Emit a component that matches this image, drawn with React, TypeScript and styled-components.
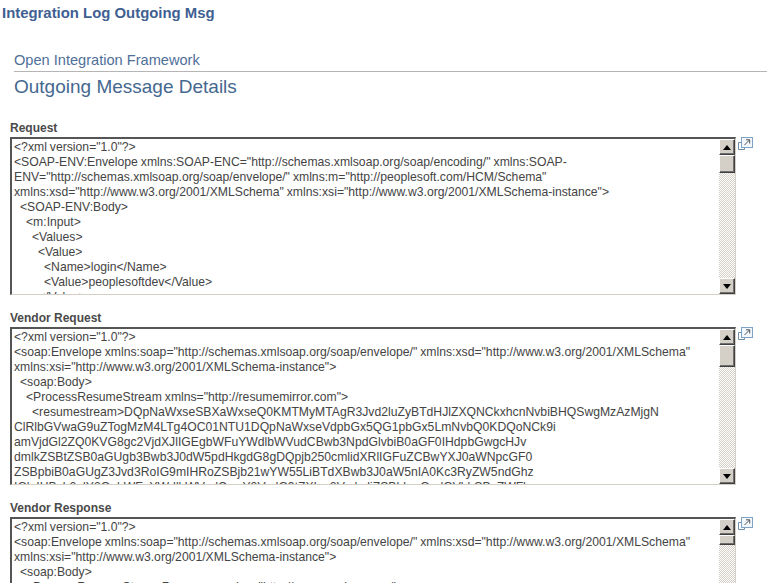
import { createGlobalStyle, styled } from 'styled-components'

const GlobalStyle = createGlobalStyle`
	html, body {
		margin: 0;
		padding: 0;
		height: 583px;
		overflow: hidden;
		background: #fff;
		font-family: 'Liberation Sans', Arial, sans-serif;
	}
`

const Page = styled.div`
	display: flex;
	flex-direction: column;
	width: 767px;
	height: 583px;
	overflow: hidden;

	& > * {
		flex-shrink: 0;
	}
`

const PageTitle = styled.h1`
	margin: 0;
	padding: 5px 0 0 2px;
	height: 46px;
	box-sizing: border-box;
	font-size: 14.9px;
	line-height: 16px;
	font-weight: bold;
	color: #3f5f92;
`

const Crumb = styled.a`
	display: block;
	margin-left: 14px;
	height: 25px;
	font-size: 14.6px;
	line-height: 28px;
	color: #4f7099;
	border-bottom: 1px solid #b5b5b5;
`

const Heading = styled.h2`
	margin: 0 0 0 14px;
	height: 49px;
	padding-top: 2px;
	box-sizing: border-box;
	font-size: 19px;
	line-height: 26px;
	font-weight: normal;
	color: #45688f;
`

const Section = styled.section`
	display: flex;
	flex-direction: column;
	margin: 0 0 16px 10px;
	width: 745px;
`

const Label = styled.div`
	height: 16px;
	font-size: 12px;
	line-height: 15px;
	font-weight: bold;
	color: #4a4a4a;
`

const Row = styled.div`
	display: flex;
	align-items: flex-start;
`

const Box = styled.div`
	display: flex;
	width: 726px;
	height: 158px;
	box-sizing: border-box;
	border-top: 2px solid #555;
	border-left: 2px solid #555;
	border-right: 1px solid #d4d0c8;
	border-bottom: 1px solid #d4d0c8;
`

const Content = styled.pre`
	flex: 1;
	margin: 0;
	padding: 1px 0 0 2px;
	overflow: hidden;
	font-family: 'Liberation Sans', Arial, sans-serif;
	font-size: 12.2px;
	line-height: 15px;
	word-spacing: -0.39px;
	color: #444;
	white-space: pre;
`

const Scrollbar = styled.div`
	display: flex;
	flex-direction: column;
	width: 16px;
	flex-shrink: 0;
	background-color: #fff;
	background-image: repeating-conic-gradient(#d4d0c8 0 25%, #fff 0 50%);
	background-size: 2px 2px;
`

const ScrollButton = styled.div`
	display: flex;
	align-items: center;
	justify-content: center;
	flex-shrink: 0;
	width: 16px;
	height: 16px;
	box-sizing: border-box;
	background: #d4d0c8;
	border-top: 1px solid #fff;
	border-left: 1px solid #fff;
	border-right: 1px solid #404040;
	border-bottom: 1px solid #404040;
	box-shadow: inset -1px -1px 0 #707070;
`

const Arrow = styled.span<{ $up?: boolean }>`
	width: 0;
	height: 0;
	border-left: 4px solid transparent;
	border-right: 4px solid transparent;
	${p => (p.$up ? 'border-bottom: 5px solid #000;' : 'border-top: 5px solid #000;')}
`

const Thumb = styled(ScrollButton)<{ $size: number }>`
	height: ${p => p.$size}px;
`

const Track = styled.div`
	flex: 1;
`

const ExpandLink = styled.a`
	display: block;
	width: 15px;
	height: 13px;
	margin: -1px 0 0 2px;
`

const ExpandIcon = () => (
	<svg width='15' height='13' viewBox='0 0 15 13' fill='none'>
		<path d='M3 5.5H.5v7h6V10.5' stroke='#6f8fa8' />
		<rect x='3.5' y='.5' width='11' height='10' fill='#f2f7fb' stroke='#7ea3c4' />
		<path d='M6.5 8l5-5M8 2.8h3.7v3.7' stroke='#555' />
	</svg>
)

type PanelProps = {
	label: string
	text: string
	thumb: number
}

const Panel = ({ label, text, thumb }: PanelProps) => (
	<Section>
		<Label>{label}</Label>
		<Row>
			<Box>
				<Content>{text}</Content>
				<Scrollbar>
					<ScrollButton>
						<Arrow $up />
					</ScrollButton>
					<Thumb $size={thumb} />
					<Track />
					<ScrollButton>
						<Arrow />
					</ScrollButton>
				</Scrollbar>
			</Box>
			<ExpandLink>
				<ExpandIcon />
			</ExpandLink>
		</Row>
	</Section>
)

const requestText = `<?xml version="1.0"?>
<SOAP-ENV:Envelope xmlns:SOAP-ENC="http://schemas.xmlsoap.org/soap/encoding/" xmlns:SOAP-
ENV="http://schemas.xmlsoap.org/soap/envelope/" xmlns:m="http://peoplesoft.com/HCM/Schema"
xmlns:xsd="http://www.w3.org/2001/XMLSchema" xmlns:xsi="http://www.w3.org/2001/XMLSchema-instance">
  <SOAP-ENV:Body>
    <m:Input>
      <Values>
        <Value>
          <Name>login</Name>
          <Value>peoplesoftdev</Value>
        </Value>`

const vendorRequestText = `<?xml version="1.0"?>
<soap:Envelope xmlns:soap="http://schemas.xmlsoap.org/soap/envelope/" xmlns:xsd="http://www.w3.org/2001/XMLSchema"
xmlns:xsi="http://www.w3.org/2001/XMLSchema-instance">
  <soap:Body>
    <ProcessResumeStream xmlns="http://resumemirror.com">
      <resumestream>DQpNaWxseSBXaWxseQ0KMTMyMTAgR3Jvd2luZyBTdHJlZXQNCkxhcnNvbiBHQSwgMzAzMjgN
ClRlbGVwaG9uZTogMzM4LTg4OC01NTU1DQpNaWxseVdpbGx5QG1pbGx5LmNvbQ0KDQoNCk9i
amVjdGl2ZQ0KVG8gc2VjdXJlIGEgbWFuYWdlbWVudCBwb3NpdGlvbiB0aGF0IHdpbGwgcHJv
dmlkZSBtZSB0aGUgb3Bwb3J0dW5pdHkgdG8gDQpjb250cmlidXRlIGFuZCBwYXJ0aWNpcGF0
ZSBpbiB0aGUgZ3Jvd3RoIG9mIHRoZSBjb21wYW55LiBTdXBwb3J0aW5nIA0Kc3RyZW5ndGhz
IGluIHByb2plY3QgbWFuYWdlbWVudCwgY3VzdG9tZXIgc2VydmljZSBhbmQgdGVhbSBsZWFk`

const vendorResponseText = `<?xml version="1.0"?>
<soap:Envelope xmlns:soap="http://schemas.xmlsoap.org/soap/envelope/" xmlns:xsd="http://www.w3.org/2001/XMLSchema"
xmlns:xsi="http://www.w3.org/2001/XMLSchema-instance">
  <soap:Body>
    <ProcessResumeStreamResponse xmlns="http://resumemirror.com">`

const App = () => {
	return (
		<Page>
			<GlobalStyle />
			<PageTitle>Integration Log Outgoing Msg</PageTitle>
			<Crumb>Open Integration Framework</Crumb>
			<Heading>Outgoing Message Details</Heading>
			<Panel label='Request' text={requestText} thumb={18} />
			<Panel label='Vendor Request' text={vendorRequestText} thumb={22} />
			<Panel label='Vendor Response' text={vendorResponseText} thumb={10} />
		</Page>
	)
}

export default App
